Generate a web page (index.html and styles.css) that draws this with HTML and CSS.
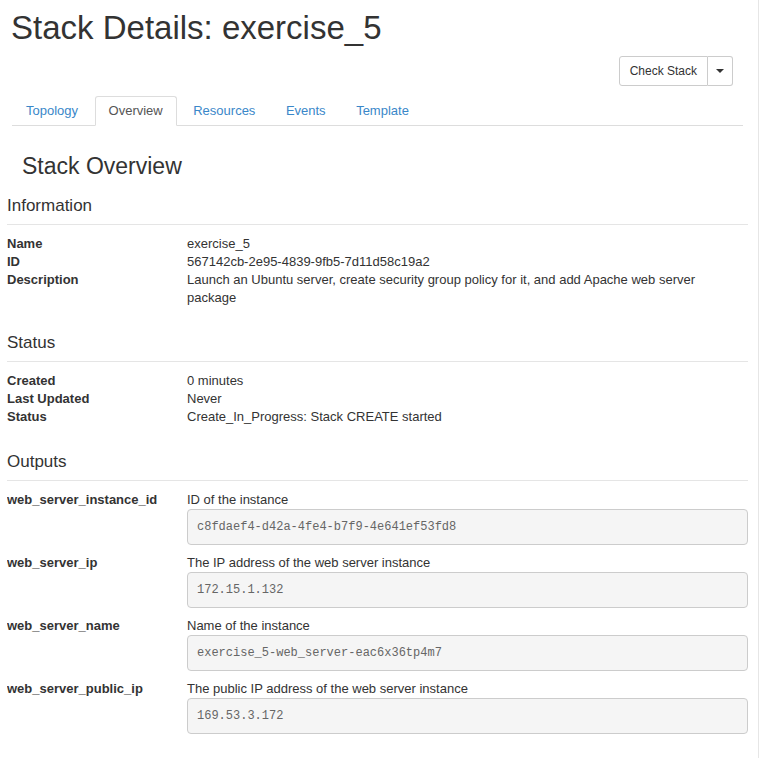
FILE: index.html
```html
<!DOCTYPE html>
<html>
<head>
<meta charset="utf-8">
<title>Stack Details</title>
<link rel="stylesheet" href="styles.css">
</head>
<body>
<div class="page">
  <div class="page-header">
    <h1 class="title">Stack Details: exercise_5</h1>
  </div>
  <div class="actions">
    <div class="btn-group">
      <button class="btn">Check Stack</button>
      <button class="btn btn-caret"><span class="caret"></span></button>
    </div>
  </div>
  <ul class="tabs">
    <li><a href="#">Topology</a></li>
    <li class="active"><a href="#">Overview</a></li>
    <li><a href="#">Resources</a></li>
    <li><a href="#">Events</a></li>
    <li><a href="#">Template</a></li>
  </ul>

  <div class="detail">
    <h3 class="overview-title">Stack Overview</h3>

    <h4 class="section-title first">Information</h4>
    <dl class="dl-horizontal">
      <dt>Name</dt>
      <dd>exercise_5</dd>
      <dt>ID</dt>
      <dd>567142cb-2e95-4839-9fb5-7d11d58c19a2</dd>
      <dt>Description</dt>
      <dd>Launch an Ubuntu server, create security group policy for it, and add Apache web server package</dd>
    </dl>

    <h4 class="section-title">Status</h4>
    <dl class="dl-horizontal">
      <dt>Created</dt>
      <dd>0 minutes</dd>
      <dt>Last Updated</dt>
      <dd>Never</dd>
      <dt>Status</dt>
      <dd>Create_In_Progress: Stack CREATE started</dd>
    </dl>

    <h4 class="section-title">Outputs</h4>
    <dl class="dl-horizontal outputs">
      <dt>web_server_instance_id</dt>
      <dd>ID of the instance<pre>c8fdaef4-d42a-4fe4-b7f9-4e641ef53fd8</pre></dd>
      <dt>web_server_ip</dt>
      <dd>The IP address of the web server instance<pre>172.15.1.132</pre></dd>
      <dt>web_server_name</dt>
      <dd>Name of the instance<pre>exercise_5-web_server-eac6x36tp4m7</pre></dd>
      <dt>web_server_public_ip</dt>
      <dd>The public IP address of the web server instance<pre>169.53.3.172</pre></dd>
    </dl>
  </div>
</div>
</body>
</html>
```

FILE: styles.css
```css
html, body {
  margin: 0;
  padding: 0;
  background: #fff;
}

body {
  font-family: "Liberation Sans", Arial, Helvetica, sans-serif;
  font-size: 13px;
  line-height: 18px;
  color: #333;
}

.page {
  width: 758px;
  min-height: 758px;
  border-right: 1px solid #e6e6e6;
  box-sizing: content-box;
}

.page-header {
  padding: 10px 0 0 11px;
}

.title {
  margin: 0;
  font-size: 33px;
  line-height: 36px;
  font-weight: normal;
  color: #333;
}

.actions {
  display: flex;
  justify-content: flex-end;
  padding: 10px 25px 0 0;
}

.btn-group {
  display: flex;
}

.btn {
  font-family: "Liberation Sans", Arial, Helvetica, sans-serif;
  font-size: 12px;
  line-height: 18px;
  color: #333;
  background: #fff;
  border: 1px solid #ccc;
  border-radius: 3px 0 0 3px;
  padding: 5px 10px;
  height: 30px;
  margin: 0;
  cursor: pointer;
}

.btn-caret {
  border-left: none;
  border-radius: 0 3px 3px 0;
  padding: 5px 8px;
  width: 25px;
  display: flex;
  align-items: center;
  justify-content: center;
}

.caret {
  display: block;
  width: 0;
  height: 0;
  border-top: 4px solid #333;
  border-left: 4px solid transparent;
  border-right: 4px solid transparent;
}

.tabs {
  list-style: none;
  margin: 10px 15px 0 12px;
  padding: 0;
  display: flex;
  border-bottom: 1px solid #ddd;
}

.tabs li {
  margin-bottom: -1px;
  margin-right: 2px;
}

.tabs a {
  display: block;
  padding: 5px 13.5px 5px 13px;
  line-height: 18px;
  border: 1px solid transparent;
  border-radius: 3px 3px 0 0;
  color: #3a87c9;
  text-decoration: none;
}

.tabs li.active a {
  color: #555;
  background: #fff;
  border-color: #ddd #ddd transparent #ddd;
}

.detail {
  padding: 0 10px 0 7px;
}

.overview-title {
  margin: 27px 0 0 15px;
  font-size: 23px;
  line-height: 26px;
  font-weight: normal;
}

.section-title {
  margin: 26px 0 0 0;
  padding-bottom: 8px;
  font-size: 17px;
  line-height: 20px;
  font-weight: normal;
  border-bottom: 1px solid #e5e5e5;
}

.section-title.first {
  margin-top: 17px;
}

.dl-horizontal {
  margin: 10px 0 0 0;
  display: grid;
  grid-template-columns: 180px 1fr;
}

.dl-horizontal dt {
  font-weight: bold;
  width: 160px;
  overflow: hidden;
  text-overflow: ellipsis;
  white-space: nowrap;
}

.dl-horizontal dd {
  margin: 0;
  padding-right: 10px;
}

.outputs dd {
  padding-right: 0;
}

.outputs pre {
  margin: 0 0 9px 0;
  padding: 9px;
  font-family: "Liberation Mono", "Courier New", monospace;
  font-size: 12px;
  line-height: 16px;
  color: #666;
  background: #f5f5f5;
  border: 1px solid #ccc;
  border-radius: 4px;
}
```
